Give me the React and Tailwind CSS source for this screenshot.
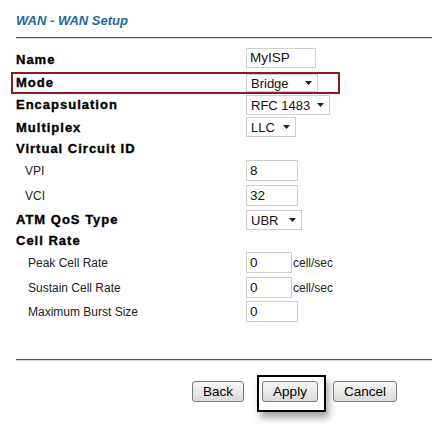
import React from "react";

const Arrow = () => (
  <svg width="7" height="4" viewBox="0 0 7 4" className="shrink-0">
    <polygon points="0,0 7,0 3.5,4" fill="#222" />
  </svg>
);

const Select = ({ value, w, h = "h-[20px]" }) => (
  <div
    className={`flex items-center justify-between border border-[#cfcfcf] bg-white pl-[4px] pr-[5px] text-[13px] leading-none text-[#111] ${w} ${h}`}
  >
    <span>{value}</span>
    <Arrow />
  </div>
);

const Input = ({ value, w }) => (
  <div
    className={`flex h-[21px] items-center border border-[#cfcfcf] bg-white pl-[3px] text-[13.5px] leading-none text-[#111] ${w}`}
  >
    {value}
  </div>
);

const BoldLabel = ({ children, pt }) => (
  <div
    className={`w-[230px] shrink-0 text-[13px] font-bold leading-4 tracking-[1px] text-black [-webkit-text-stroke:0.35px_#000] ${pt}`}
  >
    {children}
  </div>
);

const SubLabel = ({ children, pt, pl }) => (
  <div
    className={`w-[230px] shrink-0 text-[12px] leading-4 text-[#222] ${pt} ${pl}`}
  >
    {children}
  </div>
);

const Btn = ({ children, w }) => (
  <div
    className={`flex h-[21px] items-center justify-center rounded-[3px] border border-[#7a7a7a] bg-gradient-to-b from-[#f7f7f7] to-[#dadada] text-[13.5px] leading-none text-black ${w}`}
  >
    {children}
  </div>
);

export default function App() {
  return (
    <div
      className="h-[432px] w-[432px] bg-white pl-4"
      style={{ fontFamily: '"Liberation Sans", Arial, sans-serif' }}
    >
      <div className="h-4 pt-0 mt-[13px] text-[13px] font-bold italic leading-4 text-[#2468a2]">
        WAN - WAN Setup
      </div>
      <div className="mt-[8px] h-[2px] border-t border-[#555] bg-[#d8d8d8]" />

      {/* Name */}
      <div className="mt-[9px] flex h-[24px] items-start">
        <BoldLabel pt="pt-[4px]">Name</BoldLabel>
        <div className="flex h-[20px] w-[70px] items-center border border-[#cfcfcf] pl-[3px] text-[13.5px] leading-none text-[#111]">
          MyISP
        </div>
      </div>

      {/* Mode */}
      <div className="-ml-[5px] flex h-[22px] w-[329px] items-start border-2 border-[#8e1b1b] pl-[3px]">
        <BoldLabel pt="pt-[1px]">Mode</BoldLabel>
        <Select value="Bridge" w="w-[72px]" h="h-[18px]" />
      </div>

      {/* Encapsulation */}
      <div className="mt-[1px] flex h-[22px] items-start">
        <BoldLabel pt="pt-[2px]">Encapsulation</BoldLabel>
        <Select value="RFC 1483" w="w-[84px]" />
      </div>

      {/* Multiplex */}
      <div className="flex h-[24px] items-start">
        <BoldLabel pt="pt-[3px]">Multiplex</BoldLabel>
        <Select value="LLC" w="w-[50px]" />
      </div>

      {/* Virtual Circuit ID */}
      <div className="flex h-[19px] items-start">
        <BoldLabel pt="pt-0">Virtual Circuit ID</BoldLabel>
      </div>

      <div className="flex h-[25px] items-start">
        <SubLabel pt="pt-[3px]" pl="pl-[9px]">VPI</SubLabel>
        <Input value="8" w="w-[52px]" />
      </div>
      <div className="flex h-[25px] items-start">
        <SubLabel pt="pt-[3px]" pl="pl-[9px]">VCI</SubLabel>
        <Input value="32" w="w-[52px]" />
      </div>

      {/* ATM QoS */}
      <div className="flex h-[23px] items-start">
        <BoldLabel pt="pt-[2px]">ATM QoS Type</BoldLabel>
        <Select value="UBR" w="w-[56px]" />
      </div>

      {/* Cell Rate */}
      <div className="flex h-[19px] items-start">
        <BoldLabel pt="pt-0">Cell Rate</BoldLabel>
      </div>

      <div className="flex h-[25px] items-start">
        <SubLabel pt="pt-[3px]" pl="pl-[12px]">Peak Cell Rate</SubLabel>
        <Input value="0" w="w-[46px]" />
        <span className="ml-[1px] pt-[3px] text-[12px] leading-4 text-[#222]">cell/sec</span>
      </div>
      <div className="flex h-[24px] items-start">
        <SubLabel pt="pt-[3px]" pl="pl-[12px]">Sustain Cell Rate</SubLabel>
        <Input value="0" w="w-[46px]" />
        <span className="ml-[1px] pt-[3px] text-[12px] leading-4 text-[#222]">cell/sec</span>
      </div>
      <div className="flex h-[21px] items-start">
        <SubLabel pt="pt-[3px]" pl="pl-[12px]">Maximum Burst Size</SubLabel>
        <Input value="0" w="w-[52px]" />
      </div>

      <div className="mt-[37px] h-[2px] border-t border-[#555] bg-[#d8d8d8]" />

      <div className="mt-[14px] flex items-start pl-[176px]">
        <div className="mt-[6px]">
          <Btn w="w-[52px]">Back</Btn>
        </div>
        <div className="ml-[13px] border-2 border-black pb-[8px] pl-[3px] pr-[6px] pt-[4px] shadow-[3px_6px_7px_rgba(0,0,0,0.35)]">
          <Btn w="w-[56px]">Apply</Btn>
        </div>
        <div className="ml-[7px] mt-[6px]">
          <Btn w="w-[64px]">Cancel</Btn>
        </div>
      </div>
    </div>
  );
}
